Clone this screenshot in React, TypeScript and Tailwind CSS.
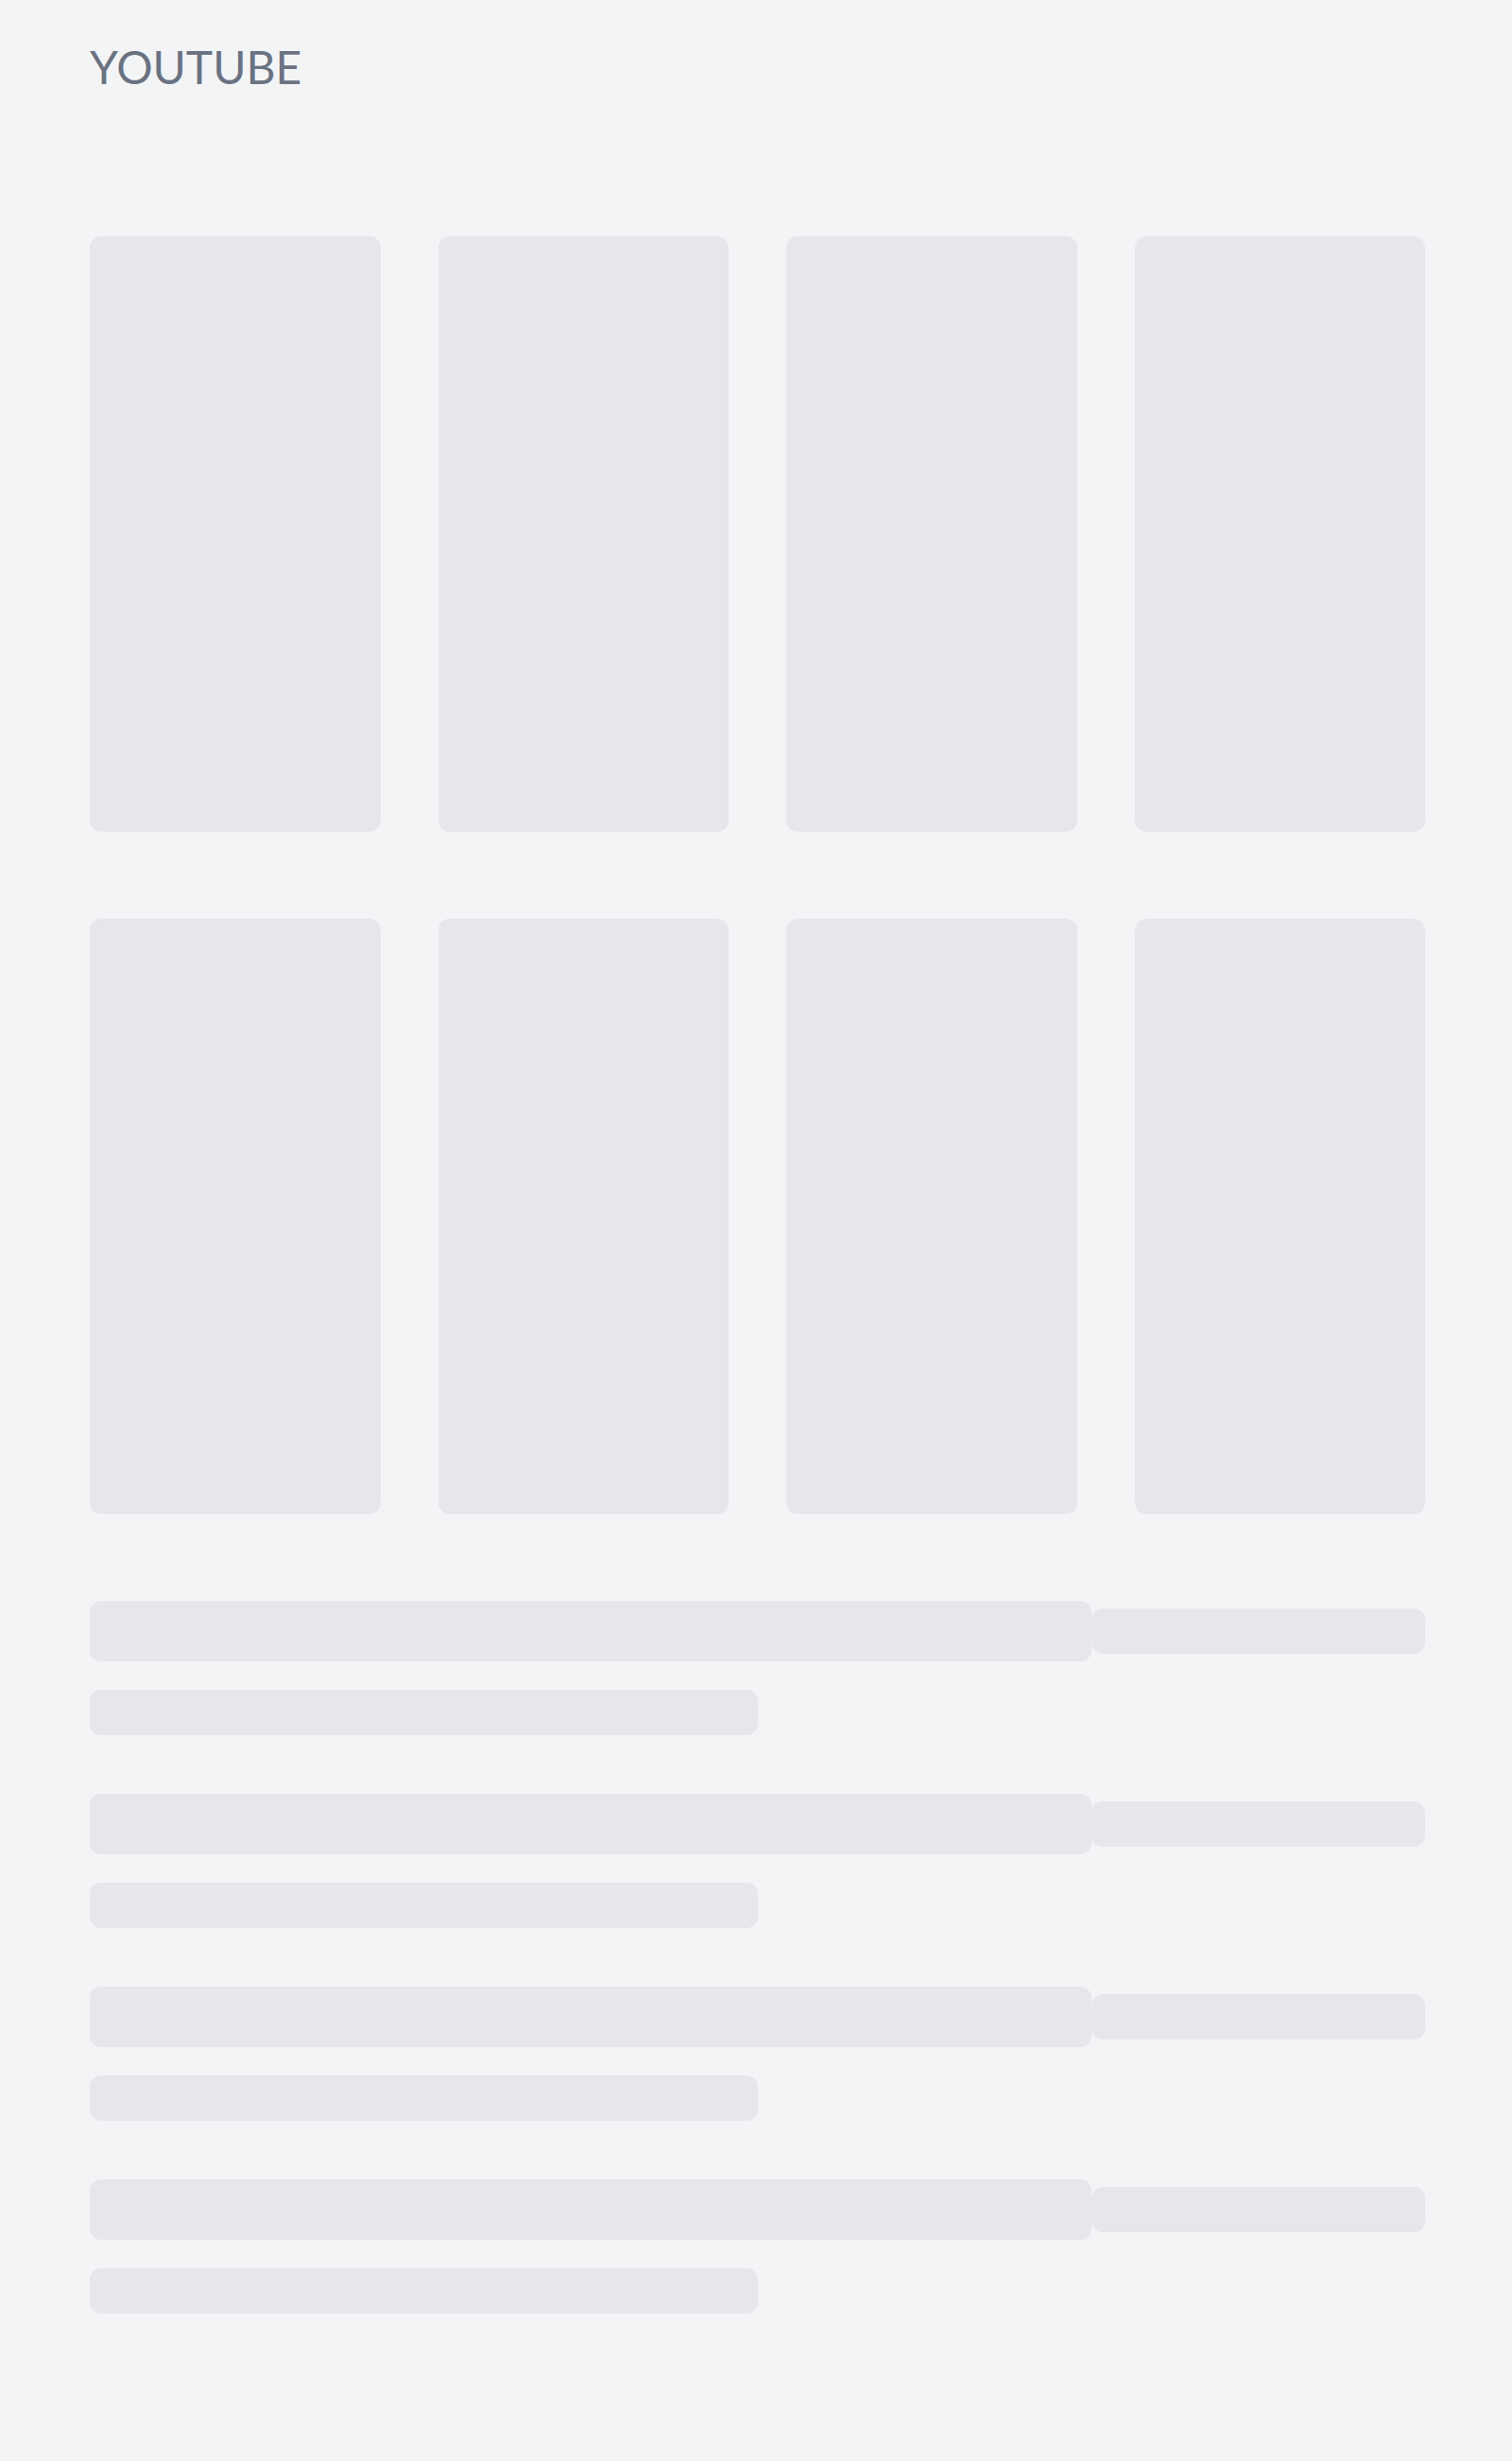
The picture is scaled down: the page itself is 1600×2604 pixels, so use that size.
export default function App() {
  const groups = [0, 1, 2, 3];
  const cards = [0, 1, 2, 3, 4, 5, 6, 7];

  return (
    <div className="min-h-screen bg-gray-100 pt-[47px] pl-[95px] pr-[92px] font-['Lato','Open_Sans',sans-serif]">
      <h1 className="text-5xl leading-none text-gray-500">YOUTUBE</h1>

      {/* Video card skeletons */}
      <div className="mt-[155px] grid grid-cols-4 gap-x-[61px] gap-y-[92px]">
        {cards.map((i) => (
          <div key={i} className="h-[630px] rounded-xl bg-gray-200" />
        ))}
      </div>

      {/* Row skeletons */}
      <div className="mt-[92px] flex flex-col gap-[62px]">
        {groups.map((i) => (
          <div key={i}>
            <div className="flex items-center">
              <div className="h-16 w-3/4 rounded-xl bg-gray-200" />
              <div className="h-12 w-1/4 rounded-xl bg-gray-200" />
            </div>
            <div className="mt-[30px] h-12 w-1/2 rounded-xl bg-gray-200" />
          </div>
        ))}
      </div>
    </div>
  );
}
